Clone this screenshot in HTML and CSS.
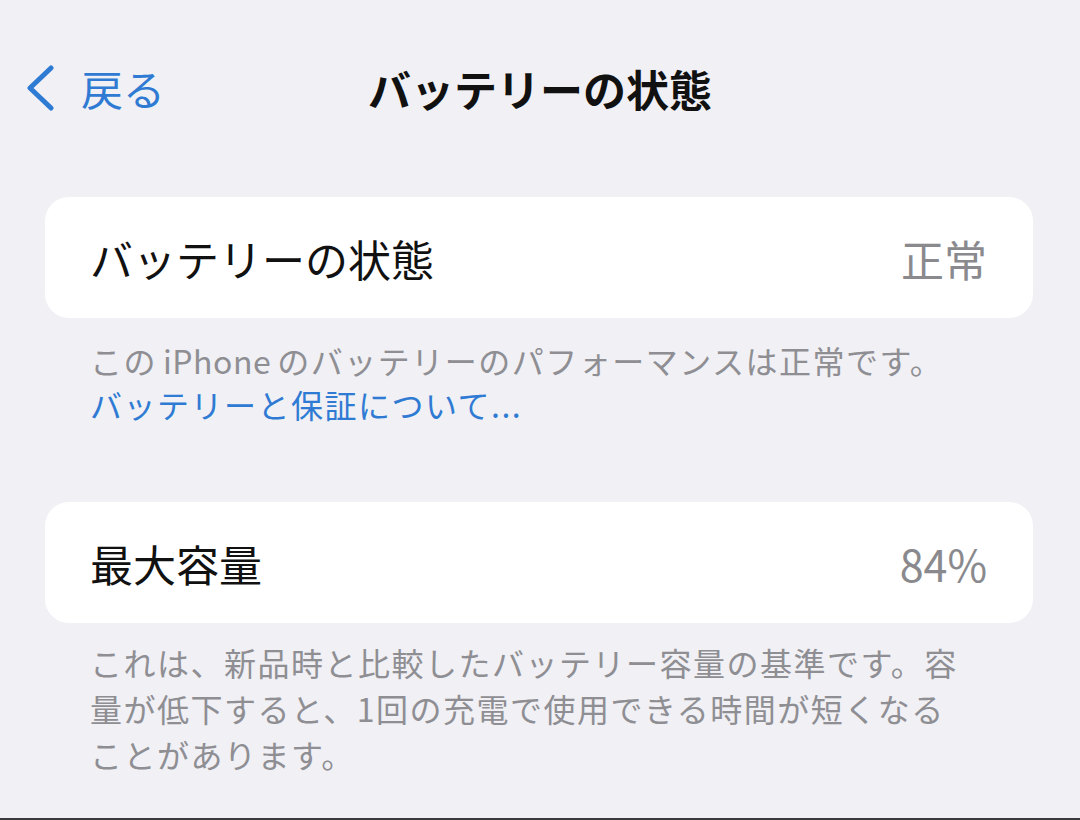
FILE: index.html
```html
<!DOCTYPE html>
<html lang="ja">

<head>
    <meta charset="UTF-8">
    <meta name="viewport" content="width=device-width, initial-scale=1.0">
    <title>バッテリーの状態</title>
    <link rel="stylesheet" href="styles.css">
</head>

<body>
    <div class="screen">
        <div class="nav-bar">
            <a class="back-link" href="#">
                <svg class="chevron" width="34" height="46" viewBox="0 0 34 46">
                    <path d="M26 3 L5 23 L26 43" fill="none" stroke="#2f7bd3" stroke-width="5" stroke-linecap="round" stroke-linejoin="round" />
                </svg>
                <span>戻る</span>
            </a>
            <h1 class="nav-title">バッテリーの状態</h1>
        </div>

        <div class="group first-group">
            <div class="row">
                <span class="row-label">バッテリーの状態</span>
                <span class="row-value">正常</span>
            </div>
        </div>
        <p class="group-footer">
            この<span class="latin">iPhone</span>のバッテリーのパフォーマンスは正常です。<br>
            <a class="footer-link" href="#">バッテリーと保証について...</a>
        </p>

        <div class="group second-group">
            <div class="row">
                <span class="row-label">最大容量</span>
                <span class="row-value">84%</span>
            </div>
        </div>
        <p class="group-footer tall">
            これは、新品時と比較したバッテリー容量の基準です。容<br>
            量が低下すると、1回の充電で使用できる時間が短くなる<br>
            ことがあります。
        </p>
    </div>
</body>

</html>
```

FILE: styles.css
```css
body {
    margin: 0;
    padding: 0;
    background-color: #f0f0f5;
    font-family: "Noto Sans CJK JP", "Noto Sans", sans-serif;
    color: #111;
}

.screen {
    width: 1080px;
    height: 818px;
    border-bottom: 2px solid #3a3a3c;
    overflow: hidden;
}

.nav-bar {
    position: relative;
    display: flex;
    align-items: center;
    height: 60px;
    margin-top: 58px;
    padding-left: 25px;
}

.back-link {
    display: flex;
    align-items: center;
    gap: 22px;
    color: #2f7bd3;
    text-decoration: none;
    font-size: 42px;
    line-height: 1;
}

.nav-title {
    position: absolute;
    left: 0;
    right: 0;
    top: 0;
    margin: 0;
    text-align: center;
    font-size: 43px;
    font-weight: 700;
    line-height: 60px;
    pointer-events: none;
}

.group {
    margin: 0 47px 0 45px;
    background: #fff;
    border-radius: 24px;
}

.first-group {
    margin-top: 79px;
}

.second-group {
    margin-top: 76px;
}

.row {
    display: flex;
    justify-content: space-between;
    align-items: center;
    height: 121px;
    padding: 0 46px 0 45px;
}

.row-label {
    font-size: 43px;
    font-weight: 400;
    color: #111;
}

.row-value {
    font-size: 43px;
    color: #8a8a8e;
}

.group-footer {
    margin: 20px 0 0;
    padding: 0 90px;
    font-size: 32px;
    line-height: 44px;
    color: #8e8e93;
    letter-spacing: 1.5px;
}

.group-footer .latin {
    margin: 0 6px;
    letter-spacing: 0.5px;
}

.group-footer.tall {
    margin-top: 16px;
    line-height: 46px;
}

.footer-link {
    color: #2f7bd3;
    text-decoration: none;
}
```
